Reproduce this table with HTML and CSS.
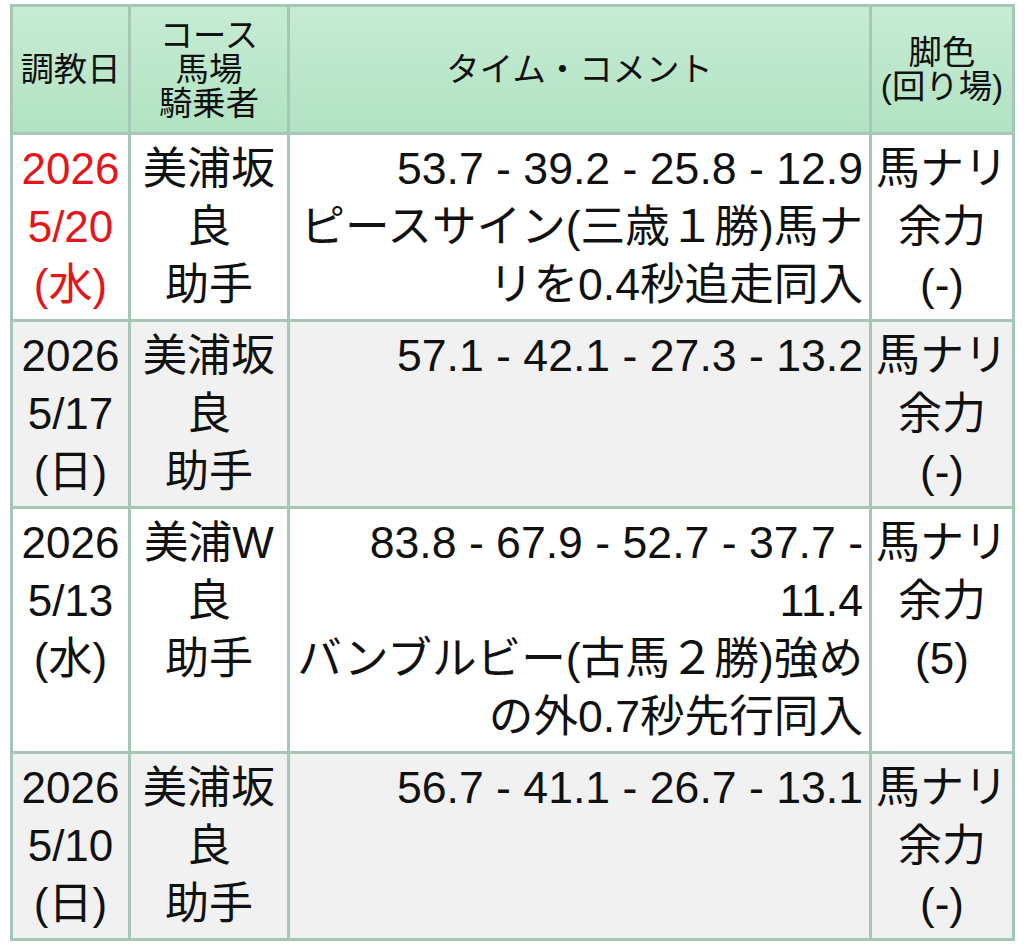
FILE: index.html
```html
<!DOCTYPE html>
<html lang="ja">
<head>
<meta charset="utf-8">
<title>調教</title>
<link rel="stylesheet" href="styles.css">
</head>
<body>
<table class="training">
  <colgroup>
    <col class="c-date">
    <col class="c-course">
    <col class="c-time">
    <col class="c-leg">
  </colgroup>
  <thead>
    <tr>
      <th>調教日</th>
      <th>コース<br>馬場<br>騎乗者</th>
      <th>タイム・コメント</th>
      <th>脚色<br>(回り場)</th>
    </tr>
  </thead>
  <tbody>
    <tr class="odd">
      <td class="date latest">2026<br>5/20<br>(水)</td>
      <td class="course">美浦坂<br>良<br>助手</td>
      <td class="time">53.7 - 39.2 - 25.8 - 12.9<br>ピースサイン(三歳１勝)馬ナリを0.4秒追走同入</td>
      <td class="leg">馬ナリ<br>余力<br>(-)</td>
    </tr>
    <tr class="even">
      <td class="date">2026<br>5/17<br>(日)</td>
      <td class="course">美浦坂<br>良<br>助手</td>
      <td class="time">57.1 - 42.1 - 27.3 - 13.2</td>
      <td class="leg">馬ナリ<br>余力<br>(-)</td>
    </tr>
    <tr class="odd">
      <td class="date">2026<br>5/13<br>(水)</td>
      <td class="course">美浦W<br>良<br>助手</td>
      <td class="time">83.8 - 67.9 - 52.7 - 37.7 - 11.4<br>バンブルビー(古馬２勝)強めの外0.7秒先行同入</td>
      <td class="leg">馬ナリ<br>余力<br>(5)</td>
    </tr>
    <tr class="even">
      <td class="date">2026<br>5/10<br>(日)</td>
      <td class="course">美浦坂<br>良<br>助手</td>
      <td class="time">56.7 - 41.1 - 26.7 - 13.1</td>
      <td class="leg">馬ナリ<br>余力<br>(-)</td>
    </tr>
  </tbody>
</table>
</body>
</html>
```
FILE: styles.css
```css
html, body {
  margin: 0;
  padding: 0;
  background: #ffffff;
}

body {
  font-family: "Liberation Sans", "Noto Sans CJK JP", sans-serif;
  color: #111111;
}

.training {
  margin: 4px 0 0 10px;
  width: 1005px;
  table-layout: fixed;
  border-collapse: separate;
  border-spacing: 0;
  border-top: 3px solid #a6c6b6;
  border-left: 3px solid #a6c6b6;
}

.c-date { width: 118px; }
.c-course { width: 159px; }
.c-time { width: 582px; }
.c-leg { width: 143px; }

.training th,
.training td {
  border-right: 3px solid #a6c6b6;
  border-bottom: 3px solid #a6c6b6;
}

.training th {
  background: linear-gradient(#c6ecd4, #b2e2c3);
  font-weight: normal;
  font-size: 33.4px;
  line-height: 34px;
  padding: 12px 0 11px;
  vertical-align: middle;
  text-align: center;
  color: #111111;
}

.training td {
  font-size: 44px;
  line-height: 58px;
  padding: 5px 2px 5px;
  vertical-align: top;
  text-align: center;
}

.training tr.even td {
  background: #f1f1f1;
}

.training td.time {
  text-align: right;
  padding-right: 6px;
  padding-left: 6px;
  font-size: 44.6px;
}

.training td.latest {
  color: #e2161b;
}
```
